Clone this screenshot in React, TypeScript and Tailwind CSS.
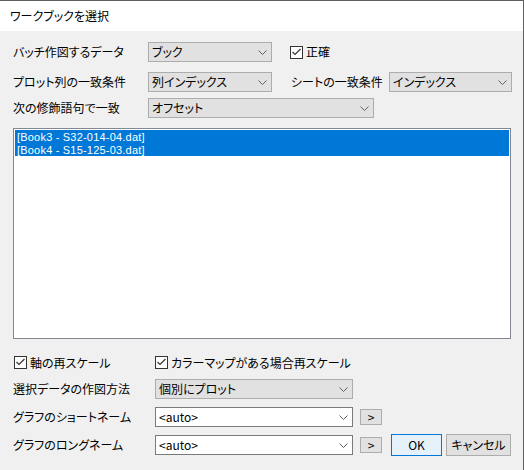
import React from "react";

const FONT = "font-['Noto_Sans_CJK_JP','Noto_Sans',sans-serif] [font-feature-settings:'palt']";

function Chevron() {
  return (
    <svg width="9" height="5" viewBox="0 0 9 5" className="shrink-0">
      <path d="M0.5 0.5 L4.5 4.5 L8.5 0.5" fill="none" stroke="#606060" strokeWidth="1" />
    </svg>
  );
}

function Select({ value, w }: { value: string; w: string }) {
  return (
    <div className={`${w} h-[20px] flex items-center justify-between bg-[#e1e1e1] border border-[#adadad] pl-[3px] pr-[4px]`}>
      <span>{value}</span>
      <Chevron />
    </div>
  );
}

function Combo({ value }: { value: string }) {
  return (
    <div className="w-[198px] h-[20px] flex items-center justify-between bg-white border border-[#7a7a7a] pl-[3px] pr-[4px]">
      <span>{value}</span>
      <Chevron />
    </div>
  );
}

function Check({ label, className = "" }: { label: string; className?: string }) {
  return (
    <div className={`flex items-center ${className}`}>
      <div className="w-[13px] h-[13px] border border-[#333333] bg-white flex items-center justify-center">
        <svg width="11" height="11" viewBox="0 0 11 11">
          <path d="M1.5 5 L4 7.5 L9.5 2" fill="none" stroke="#333333" strokeWidth="1.2" />
        </svg>
      </div>
      <span className="ml-[3px]">{label}</span>
    </div>
  );
}

function Arrow() {
  return (
    <div className="ml-[7px] w-[22px] h-[16px] flex items-center justify-center bg-[#e1e1e1] border border-[#adadad] text-[12px] leading-none">
      &gt;
    </div>
  );
}

const FILES = ["[Book3 - S32-014-04.dat]", "[Book4 - S15-125-03.dat]"];

export default function App() {
  return (
    <div className={`${FONT} w-[524px] h-[470px] bg-[#f0f0f0] border-t border-r border-[#5f5f5f] flex flex-col text-[12px] leading-none text-black`}>
      <div className="h-[30px] shrink-0 bg-white pl-[10px] flex items-center">ワークブックを選択</div>

      <div className="flex flex-col pl-[13px]">
        <div className="mt-[11px] h-[20px] flex items-center">
          <span className="w-[135px]">バッチ作図するデータ</span>
          <Select value="ブック" w="w-[124px]" />
          <Check label="正確" className="ml-[18px]" />
        </div>

        <div className="mt-[10px] h-[20px] flex items-center">
          <span className="w-[135px]">プロット列の一致条件</span>
          <Select value="列インデックス" w="w-[124px]" />
          <span className="ml-[19px] w-[98px]">シートの一致条件</span>
          <Select value="インデックス" w="w-[123px]" />
        </div>

        <div className="mt-[6px] h-[20px] flex items-center">
          <span className="w-[135px]">次の修飾語句で一致</span>
          <Select value="オフセット" w="w-[226px]" />
        </div>

        <div className="mt-[10px] w-[498px] h-[211px] bg-white border border-[#828790] pt-[1px] px-[1px] flex flex-col">
          {FILES.map((f) => (
            <div
              key={f}
              className="h-[13px] bg-[#0078d7] text-white pl-[2px] flex items-center font-['Liberation_Sans',sans-serif] text-[11px] leading-[12px] tracking-[0.2px]"
            >
              {f}
            </div>
          ))}
        </div>

        <div className="mt-[17px] h-[13px] flex items-center">
          <Check label="軸の再スケール" className="ml-[1px] w-[141px]" />
          <Check label="カラーマップがある場合再スケール" />
        </div>

        <div className="mt-[10px] h-[20px] flex items-center">
          <span className="w-[142px]">選択データの作図方法</span>
          <Select value="個別にプロット" w="w-[198px]" />
        </div>

        <div className="mt-[8px] h-[20px] flex items-center">
          <span className="w-[142px]">グラフのショートネーム</span>
          <Combo value="<auto>" />
          <Arrow />
        </div>

        <div className="mt-[8px] h-[20px] flex items-center">
          <span className="w-[142px]">グラフのロングネーム</span>
          <Combo value="<auto>" />
          <Arrow />
          <button className="ml-[9px] w-[51px] h-[22px] bg-[#e5f1fb] border border-[#0078d7] flex items-center justify-center">
            OK
          </button>
          <button className="ml-[4px] w-[65px] h-[22px] bg-[#e1e1e1] border border-[#adadad] flex items-center justify-center">
            キャンセル
          </button>
        </div>
      </div>
    </div>
  );
}
